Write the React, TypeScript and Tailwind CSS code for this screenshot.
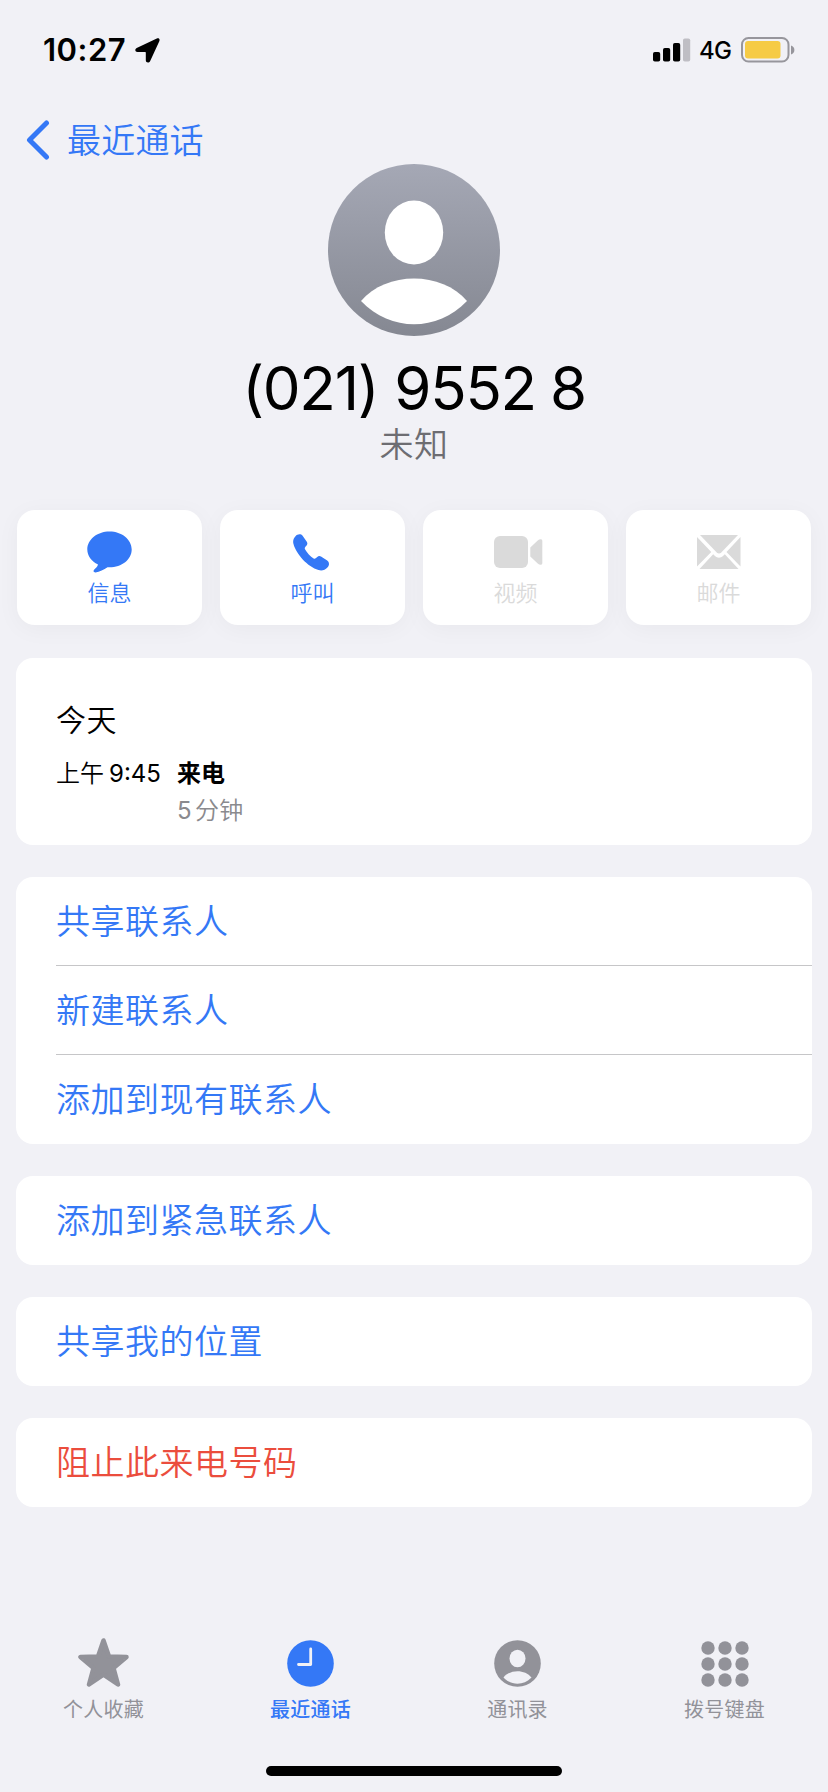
import type { ReactNode } from 'react'

import clsx from 'clsx'

interface Action {
  label: string
  icon: ReactNode
  disabled?: boolean
}

interface Tab {
  label: string
  icon: ReactNode
  active?: boolean
}

const actions: Action[] = [
  { label: '信息', icon: <MessageIcon /> },
  { label: '呼叫', icon: <PhoneIcon /> },
  { label: '视频', icon: <VideoIcon />, disabled: true },
  { label: '邮件', icon: <MailIcon />, disabled: true },
]

const tabs: Tab[] = [
  { label: '个人收藏', icon: <StarIcon /> },
  { label: '最近通话', icon: <ClockIcon />, active: true },
  { label: '通讯录', icon: <ContactsIcon /> },
  { label: '拨号键盘', icon: <KeypadIcon /> },
]

export default function App() {
  return (
    <div className="flex h-[1792px] w-[828px] flex-col overflow-hidden bg-[#f1f1f6] font-[Inter,'Noto_Sans_CJK_SC',sans-serif] text-black">
      <StatusBar />

      <header className="flex h-[64px] items-center pl-[26px] text-[#3478f6]">
        <button className="flex items-center gap-[17px]">
          <svg className="h-[40px] w-[24px]" viewBox="0 0 24 40" fill="none">
            <path d="M20.5 3L3.500 20l17 17" stroke="currentColor" strokeWidth="5" strokeLinecap="round" strokeLinejoin="round" />
          </svg>
          <span className="pt-[2px] text-[34px] leading-[40px] font-[350] tracking-[0.2px]">最近通话</span>
        </button>
      </header>

      <section className="-mt-[8px] flex flex-col items-center">
        <Avatar />
        <h1 className="mt-[16px] flex h-[72px] items-center text-[60px] leading-[72px] font-normal tracking-[-1.3px]">
          <span>(021)</span>
          <span className="ml-[16px]">9552</span>
          <span className="ml-[14px]">8</span>
        </h1>
        <p className="mt-px h-[39px] text-[34px] leading-[40px] font-[350] tracking-[0.5px] text-[#6d6d72]">未知</p>
      </section>

      <section className="mt-[46px] grid grid-cols-4 gap-[18px] px-[17px]">
        {actions.map((action) => (
          <ActionButton key={action.label} {...action} />
        ))}
      </section>

      <main className="mt-[33px] flex flex-col gap-[32px] px-[16px]">
        <Card className="h-[187px] px-[40px] pt-[42px]">
          <h2 className="text-[30px] leading-[40px] font-[350] tracking-[0.5px]">今天</h2>
          <div className="mt-[15px] flex text-[24px] leading-[37px]">
            <span className="w-[121px] font-[350]">
              上午<span className="ml-[5px] font-normal">9:45</span>
            </span>
            <div className="flex flex-col">
              <span className="font-bold">来电</span>
              <span className="font-[350] tracking-[0.3px] text-[#8a8a8e]">
                <span className="font-normal">5</span>
                <span className="ml-[3px]">分钟</span>
              </span>
            </div>
          </div>
        </Card>

        <Card>
          <ListRow label="共享联系人" divided />
          <ListRow label="新建联系人" divided />
          <ListRow label="添加到现有联系人" />
        </Card>
        <Card>
          <ListRow label="添加到紧急联系人" />
        </Card>
        <Card>
          <ListRow label="共享我的位置" />
        </Card>
        <Card>
          <ListRow label="阻止此来电号码" destructive />
        </Card>
      </main>

      <nav className="mt-auto grid h-[130px] grid-cols-4">
        {tabs.map((tab) => (
          <TabItem key={tab.label} {...tab} />
        ))}
      </nav>
      <div className="mx-auto mb-[16px] h-[10px] w-[296px] shrink-0 rounded-full bg-black" />
    </div>
  )
}

function StatusBar() {
  return (
    <div className="flex h-[108px] items-start justify-between pt-[34px] pr-[33px] pl-[43px]">
      <div className="flex h-[32px] items-center gap-[9px]">
        <span className="text-[31px] leading-[32px] font-semibold tracking-[0.5px]">10:27</span>
        <svg className="size-[25px]" viewBox="0 0 25 25" fill="currentColor">
          <path d="M21.8.6C23.8-.2 25.200 1.200 24.300 3.200L15.200 23C14 25.400 10.800 24.800 10.800 22.300V14.600a.6.6 0 0 0-.6-.6H2.500C0 14-.5 11 1.700 10Z" />
        </svg>
      </div>
      <div className="flex h-[32px] items-center">
        <svg className="h-[24px] w-[38px]" viewBox="0 0 38 24">
          <rect x="0" y="14" width="7.2" height="9.5" rx="1.8" />
          <rect x="10" y="10" width="7.2" height="13.5" rx="1.8" />
          <rect x="20" y="5" width="7.2" height="18.5" rx="1.8" />
          <rect x="30" y="0.5" width="7.2" height="23" rx="1.8" fill="#bfbec4" />
        </svg>
        <span className="mt-[2px] ml-[8px] w-[32px] text-[24px] leading-[32px] font-medium tracking-[-0.8px]">4G</span>
        <svg className="ml-[10px] h-[26px] w-[54px]" viewBox="0 0 54 26" fill="none">
          <rect x="1" y="1" width="46.5" height="23.5" rx="6.5" stroke="#97969c" strokeWidth="2" />
          <rect x="4" y="4" width="35.5" height="17.5" rx="3" fill="#f6cb45" />
          <path d="M50 8.5c4.500 1 4.500 8 0 9z" fill="#97969c" />
        </svg>
      </div>
    </div>
  )
}

function Avatar() {
  return (
    <svg className="size-[172px]" viewBox="0 0 172 172">
      <defs>
        <linearGradient id="avatar" x1="0" y1="0" x2="0" y2="1">
          <stop offset="0" stopColor="#a5a8b5" />
          <stop offset="1" stopColor="#858892" />
        </linearGradient>
      </defs>
      <circle cx="86" cy="86" r="86" fill="url(#avatar)" />
      <ellipse cx="86" cy="68.5" rx="29.2" ry="32" fill="#fff" />
      <path d="M33 137C58 107 114 107 139 137C109 168 63 168 33 137Z" fill="#fff" />
    </svg>
  )
}

function ActionButton({ label, icon, disabled = false }: Action) {
  return (
    <button
      disabled={disabled}
      className={clsx(
        'flex h-[115px] flex-col items-center rounded-[18px] bg-white pt-[20px] shadow-[0_4px_24px_rgba(0,0,0,0.04)]',
        disabled ? 'text-[#dadada]' : 'text-[#3478f6]',
      )}
    >
      <span className="flex h-[44px] items-center">{icon}</span>
      <span className="mt-[4px] text-[22px] leading-[30px] font-[350]">{label}</span>
    </button>
  )
}

function Card({ children, className }: { children: ReactNode; className?: string }) {
  return <div className={clsx('overflow-hidden rounded-[17px] bg-white', className)}>{children}</div>
}

function ListRow({ label, divided = false, destructive = false }: { label: string; divided?: boolean; destructive?: boolean }) {
  return (
    <button
      className={clsx(
        'ml-[40px] flex h-[89px] w-[756px] items-center text-[34px] font-[350] tracking-[0.5px]',
        divided && 'border-b border-[#c6c6c8]',
        destructive ? 'text-[#eb4d3d]' : 'text-[#3478f6]',
      )}
    >
      {label}
    </button>
  )
}

function TabItem({ label, icon, active = false }: Tab) {
  return (
    <button className={clsx('flex flex-col items-center', active ? 'text-[#3478f6]' : 'text-[#929299]')}>
      <span className="flex h-[52px] items-center">{icon}</span>
      <span className={clsx('mt-[7px] text-[20px] leading-[30px] tracking-[0.2px]', active ? 'font-medium' : 'font-normal')}>
        {label}
      </span>
    </button>
  )
}

function MessageIcon() {
  return (
    <svg className="h-[42px] w-[45px]" viewBox="0 0 45 42" fill="currentColor">
      <path d="M22.500.5C34.800.5 44.700 8.500 44.700 18.500S34.800 36.300 22.500 36.300H20.500C17 38.800 12.500 41 8.500 41.400C6.300 41.500 6 39.700 7.300 38.500C9 37 10.500 35.500 11 33.500C4.500 30.300.3 24.800.3 18.500C.3 8.500 10.200.5 22.500.5Z" />
    </svg>
  )
}

function PhoneIcon() {
  return (
    <svg className="mr-[2px] h-[37px] w-[37px]" viewBox="0 0 37 37" fill="currentColor">
      <path d="M2.500 2.200C4.500 0 7.800-.5 9.600 1.800L13.800 7.800C14.800 9.400 14.400 10.600 13.200 12C12 13.200 11.400 14 12 15.200C13.800 18.600 17.500 22.600 20.600 24.400C21.800 25 22.600 24.600 24 23.300C25.300 22 26.600 21.700 28 22.600L34.200 26.600C36.600 28.400 36.500 31.200 34.400 33.400C32 36 29 37 25.500 36C15 33 3 20 .5 10C-.4 7 .5 4.200 2.500 2.200Z" />
    </svg>
  )
}

function VideoIcon() {
  return (
    <svg className="ml-[5px] h-[32px] w-[49px]" viewBox="0 0 49 32" fill="currentColor">
      <rect width="34" height="32" rx="6" />
      <path d="M36.300 11.500L44 4.300C45.500 3 48.300 2.500 48.300 5V27C48.300 29.500 45.500 29 44 27.700L36.300 20.500Z" />
    </svg>
  )
}

function MailIcon() {
  return (
    <svg className="h-[34px] w-[44px]" viewBox="0 0 44 34" fill="currentColor">
      <path d="M3 0H41L24.500 17.300C22.700 19 21.300 19 19.500 17.300Z" />
      <path d="M0 2L14.300 17L0 31.500Z" />
      <path d="M43.500 2L29.500 17L43.500 31.500Z" />
      <path d="M2.500 34L16.200 19.200L18 21C20.500 23.200 23.500 23.200 26 21L27.800 19.200L41.500 34Z" />
    </svg>
  )
}

function StarIcon() {
  return (
    <svg className="h-[49px] w-[51px]" viewBox="0 0 51 49" fill="currentColor">
      <path
        d="M25.500 2.500L31 18.500L48.500 19L35.500 30L40 46.500L25.500 36.700L11 46.500L15.500 30L2.500 19L20 18.500Z"
        stroke="currentColor"
        strokeWidth="4.5"
        strokeLinejoin="round"
      />
    </svg>
  )
}

function ClockIcon() {
  return (
    <svg className="mt-[3px] size-[47px]" viewBox="0 0 47 47" fill="none">
      <circle cx="23.5" cy="23.5" r="23.3" fill="currentColor" />
      <path d="M23.700 9V24.500H11.500" stroke="#f1f1f6" strokeWidth="2.8" strokeLinecap="round" strokeLinejoin="round" />
    </svg>
  )
}

function ContactsIcon() {
  return (
    <svg className="mt-[3px] size-[47px]" viewBox="0 0 47 47">
      <circle cx="23.5" cy="23.5" r="23.3" fill="currentColor" />
      <ellipse cx="23.5" cy="18.5" rx="8" ry="8.7" fill="#f1f1f6" />
      <path d="M9.500 37.500C16 29 31 29 37.500 37.500C29.500 45.800 17.500 45.800 9.500 37.500Z" fill="#f1f1f6" />
    </svg>
  )
}

function KeypadIcon() {
  return (
    <svg className="mt-[3px] h-[46px] w-[48px]" viewBox="0 0 48 46" fill="currentColor">
      {[7, 23, 39].map((cy) => [7, 24, 41].map((cx) => <circle key={`${cx}-${cy}`} cx={cx} cy={cy} r="6.7" />))}
    </svg>
  )
}
